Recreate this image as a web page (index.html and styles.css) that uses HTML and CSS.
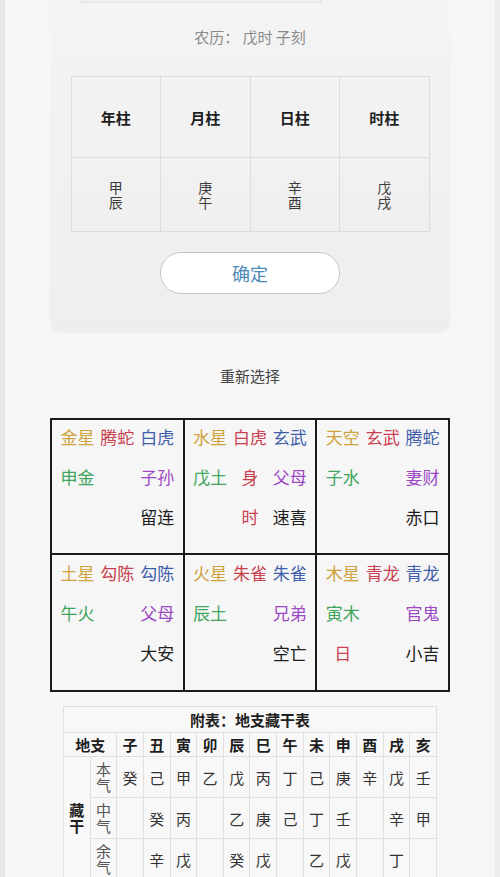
FILE: index.html
```html
<!DOCTYPE html>
<html lang="zh">
<head>
    <meta charset="UTF-8">
    <meta name="viewport" content="width=device-width, initial-scale=1.0">
    <title>小六壬排盘</title>
    <link rel="stylesheet" href="styles.css">
</head>
<body>
    <div class="page">
        <div class="card">
            <div class="prev-edge"></div>
            <p class="lunar">农历：&nbsp;戊时 子刻</p>
            <table class="pillars">
                <tr class="head">
                    <th>年柱</th>
                    <th>月柱</th>
                    <th>日柱</th>
                    <th>时柱</th>
                </tr>
                <tr class="body">
                    <td>甲<br>辰</td>
                    <td>庚<br>午</td>
                    <td>辛<br>酉</td>
                    <td>戊<br>戌</td>
                </tr>
            </table>
            <div class="actions">
                <button type="button" class="confirm-btn">确定</button>
            </div>
        </div>

        <p class="reselect">重新选择</p>

        <table class="board">
            <tr>
                <td>
                    <div class="line"><span class="gold">金星</span><span class="red">腾蛇</span><span class="blue">白虎</span></div>
                    <div class="line"><span class="green">申金</span><span></span><span class="purple">子孙</span></div>
                    <div class="line"><span></span><span></span><span class="black">留连</span></div>
                </td>
                <td>
                    <div class="line"><span class="gold">水星</span><span class="red">白虎</span><span class="blue">玄武</span></div>
                    <div class="line"><span class="green">戊土</span><span class="red">身</span><span class="purple">父母</span></div>
                    <div class="line"><span></span><span class="red">时</span><span class="black">速喜</span></div>
                </td>
                <td>
                    <div class="line"><span class="gold">天空</span><span class="red">玄武</span><span class="blue">腾蛇</span></div>
                    <div class="line"><span class="green">子水</span><span></span><span class="purple">妻财</span></div>
                    <div class="line"><span></span><span></span><span class="black">赤口</span></div>
                </td>
            </tr>
            <tr>
                <td>
                    <div class="line"><span class="gold">土星</span><span class="red">勾陈</span><span class="blue">勾陈</span></div>
                    <div class="line"><span class="green">午火</span><span></span><span class="purple">父母</span></div>
                    <div class="line"><span></span><span></span><span class="black">大安</span></div>
                </td>
                <td>
                    <div class="line"><span class="gold">火星</span><span class="red">朱雀</span><span class="blue">朱雀</span></div>
                    <div class="line"><span class="green">辰土</span><span></span><span class="purple">兄弟</span></div>
                    <div class="line"><span></span><span></span><span class="black">空亡</span></div>
                </td>
                <td>
                    <div class="line"><span class="gold">木星</span><span class="red">青龙</span><span class="blue">青龙</span></div>
                    <div class="line"><span class="green">寅木</span><span></span><span class="purple">官鬼</span></div>
                    <div class="line"><span class="red">日</span><span></span><span class="black">小吉</span></div>
                </td>
            </tr>
        </table>

        <table class="hidden-stems">
            <tr class="title">
                <th colspan="14">附表：地支藏干表</th>
            </tr>
            <tr class="branches">
                <th colspan="2">地支</th>
                <th>子</th><th>丑</th><th>寅</th><th>卯</th><th>辰</th><th>巳</th>
                <th>午</th><th>未</th><th>申</th><th>酉</th><th>戌</th><th>亥</th>
            </tr>
            <tr>
                <th rowspan="3" class="group">藏<br>干</th>
                <td class="kind">本<br>气</td>
                <td>癸</td><td>己</td><td>甲</td><td>乙</td><td>戊</td><td>丙</td>
                <td>丁</td><td>己</td><td>庚</td><td>辛</td><td>戊</td><td>壬</td>
            </tr>
            <tr>
                <td class="kind">中<br>气</td>
                <td></td><td>癸</td><td>丙</td><td></td><td>乙</td><td>庚</td>
                <td>己</td><td>丁</td><td>壬</td><td></td><td>辛</td><td>甲</td>
            </tr>
            <tr>
                <td class="kind">余<br>气</td>
                <td></td><td>辛</td><td>戊</td><td></td><td>癸</td><td>戊</td>
                <td></td><td>乙</td><td>戊</td><td></td><td>丁</td><td></td>
            </tr>
        </table>
    </div>
</body>
</html>
```

FILE: styles.css
```css
body {
    margin: 0;
    padding: 0;
    background-color: #f6f6f6;
    font-family: "Noto Sans CJK SC", "Noto Sans", sans-serif;
    color: #333;
}
.page {
    min-height: 877px;
    padding: 0 50px;
    border-left: 5px solid #e6e6e6;
    border-right: 5px solid #ececec;
    box-sizing: border-box;
    overflow: hidden;
}
.page > * {
    margin-left: -5px;
    margin-right: -5px;
}
.card {
    background: linear-gradient(#f4f4f4, #eeeeee);
    border-radius: 0 0 12px 12px;
    padding: 0 0 39px;
}
.prev-edge {
    width: 240px;
    height: 2px;
    margin-left: 30px;
    border: 1px solid #e2e2e2;
    border-top: none;
    border-radius: 0 0 8px 8px;
    background: #f0f0f0;
}
.lunar {
    margin: 24px 0 29px;
    text-align: center;
    font-size: 15px;
    line-height: 20px;
    color: #8a8a8a;
}
.pillars {
    width: 359px;
    margin: 0 auto;
    border-collapse: collapse;
    table-layout: fixed;
}
.pillars th,
.pillars td {
    border: 1px solid #dcdcdc;
    text-align: center;
    padding: 0;
}
.pillars .head th {
    height: 80px;
    font-size: 15px;
    font-weight: bold;
    color: #1e1e1e;
}
.pillars .body td {
    height: 73px;
    font-size: 14px;
    line-height: 15px;
    color: #3a3a3a;
}
.actions {
    display: flex;
    justify-content: center;
    margin-top: 20px;
}
.confirm-btn {
    width: 180px;
    height: 42px;
    border: 1px solid #c6c6c6;
    border-radius: 21px;
    background: #fff;
    color: #4d8ab6;
    font-family: inherit;
    font-size: 18px;
}
.reselect {
    margin: 33px 0 32px;
    text-align: center;
    font-size: 15px;
    line-height: 20px;
    color: #444;
}
.board {
    width: 400px;
    border-collapse: collapse;
    table-layout: fixed;
    border: 2px solid #1a1a1a;
}
.board td {
    height: 135px;
    border: 2px solid #1a1a1a;
    padding: 0 8px;
    vertical-align: top;
    box-sizing: border-box;
}
.board tr + tr td {
    height: 137px;
}
.line {
    display: grid;
    grid-template-columns: repeat(3, 1fr);
    column-gap: 5px;
    height: 33px;
    margin-bottom: 7px;
    line-height: 33px;
    font-size: 17px;
    text-align: center;
}
.board tr + tr .line:first-child {
    margin-top: 1px;
}
.gold { color: #cfa23e; }
.red { color: #c9414f; }
.blue { color: #3f5ea9; }
.green { color: #3fa55e; }
.purple { color: #9c48c4; }
.black { color: #1e1e1e; }
.hidden-stems {
    width: 374px;
    margin: 14px auto 0;
    border-collapse: collapse;
    table-layout: fixed;
    font-size: 15px;
}
.hidden-stems th,
.hidden-stems td {
    border: 1px solid #e0e0e0;
    background: #f8f8f8;
    text-align: center;
    padding: 0;
    color: #333;
}
.hidden-stems th {
    font-weight: bold;
    color: #1e1e1e;
}
.hidden-stems .title th {
    height: 25px;
}
.hidden-stems .branches th {
    height: 23px;
}
.hidden-stems td {
    height: 40px;
}
.hidden-stems .kind,
.hidden-stems .group {
    line-height: 16px;
}
.hidden-stems .kind {
    color: #555;
}
```
